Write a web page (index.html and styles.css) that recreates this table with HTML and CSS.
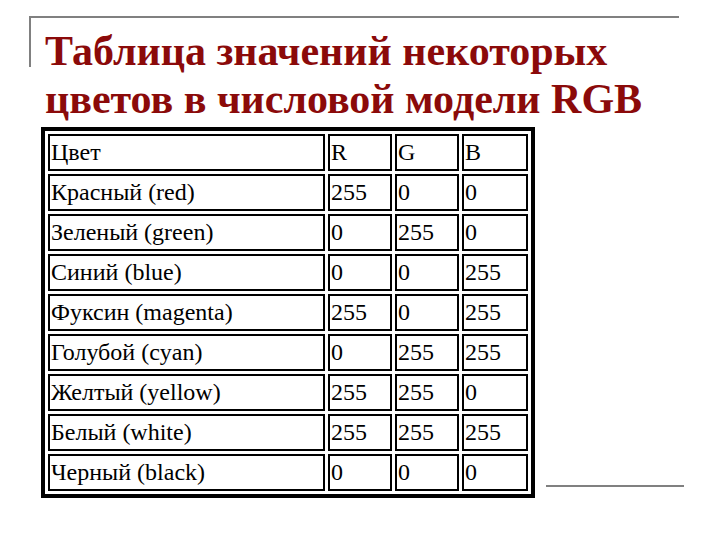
FILE: index.html
```html
<!DOCTYPE html>
<html lang="ru">
<head>
<meta charset="utf-8">
<link rel="stylesheet" href="styles.css">
</head>
<body>
<div class="slide">
  <div class="corner"></div>
  <div class="rule-bottom"></div>
  <h1 class="title">Таблица значений некоторых<br>цветов в числовой модели RGB</h1>
  <table class="rgb">
    <tr><td class="name">Цвет</td><td>R</td><td>G</td><td>B</td></tr>
    <tr><td class="name">Красный (red)</td><td>255</td><td>0</td><td>0</td></tr>
    <tr><td class="name">Зеленый (green)</td><td>0</td><td>255</td><td>0</td></tr>
    <tr><td class="name">Синий (blue)</td><td>0</td><td>0</td><td>255</td></tr>
    <tr><td class="name">Фуксин (magenta)</td><td>255</td><td>0</td><td>255</td></tr>
    <tr><td class="name">Голубой (cyan)</td><td>0</td><td>255</td><td>255</td></tr>
    <tr><td class="name">Желтый (yellow)</td><td>255</td><td>255</td><td>0</td></tr>
    <tr><td class="name">Белый (white)</td><td>255</td><td>255</td><td>255</td></tr>
    <tr><td class="name">Черный (black)</td><td>0</td><td>0</td><td>0</td></tr>
  </table>
</div>
</body>
</html>
```
FILE: styles.css
```css
html, body {
  margin: 0;
  padding: 0;
  background: #ffffff;
}
.slide {
  position: relative;
  width: 720px;
  height: 540px;
  overflow: hidden;
  padding-top: 27px;
  box-sizing: border-box;
}
.corner {
  position: absolute;
  left: 29px;
  top: 16px;
  width: 648px;
  height: 49px;
  border-top: 2px solid #808080;
  border-left: 2px solid #808080;
}
.rule-bottom {
  position: absolute;
  left: 546px;
  top: 485px;
  width: 138px;
  height: 2px;
  background: #808080;
}
.title {
  margin: 0 0 0 45px;
  font-family: "Liberation Serif", "Times New Roman", serif;
  font-weight: bold;
  font-size: 42px;
  line-height: 48px;
  color: #8b0a0a;
  white-space: nowrap;
}
.rgb {
  margin: 4px 0 0 41px;
  border: 4px solid #000;
  border-spacing: 3px;
  font-family: "Liberation Serif", "Times New Roman", serif;
  font-size: 24px;
  color: #000;
}
.rgb td {
  border: 2px solid #000;
  padding: 0 1px;
  box-sizing: border-box;
  height: 37px;
  vertical-align: middle;
  width: 64px;
}
.rgb td.name {
  width: 277px;
}
.rgb td:last-child {
  width: 66px;
}
```
